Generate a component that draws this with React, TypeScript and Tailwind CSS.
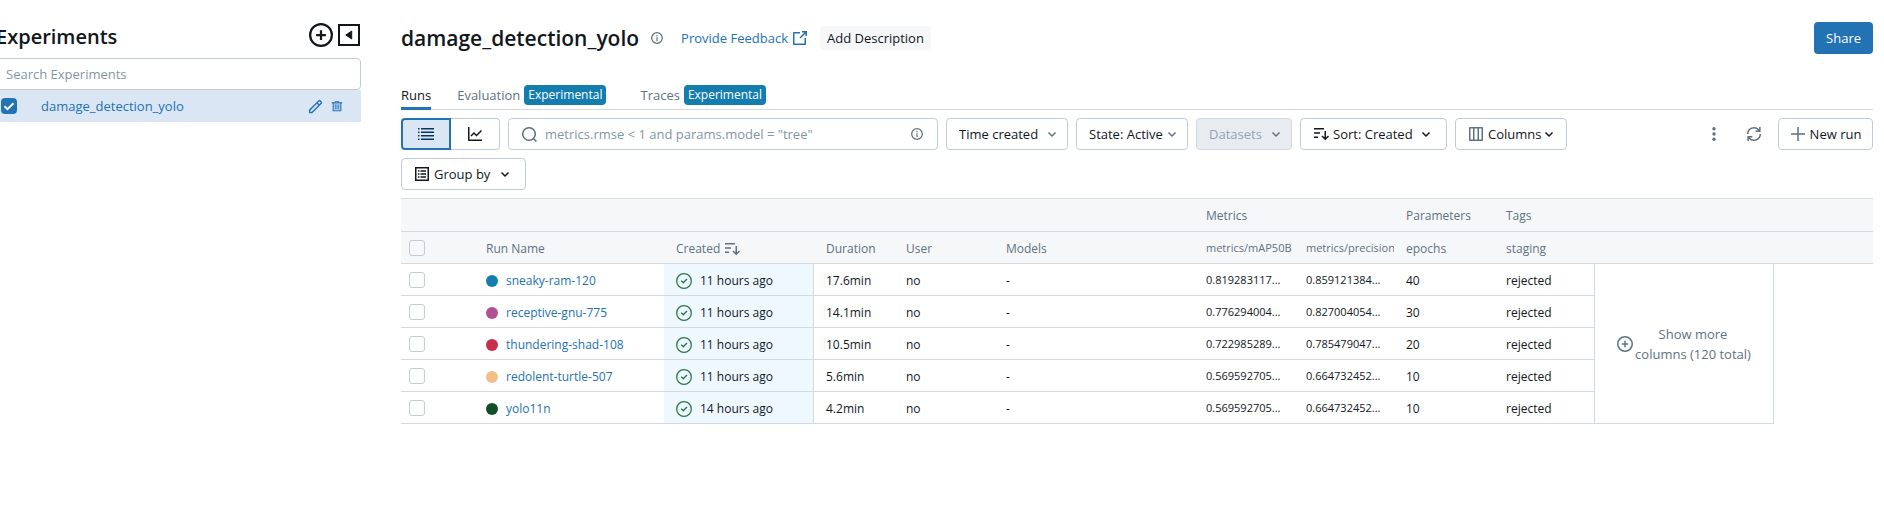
import type { ReactNode } from "react";

type IconProps = { className?: string };

const Svg = ({ className = "", children }: IconProps & { children: ReactNode }) => (
  <svg viewBox="0 0 16 16" fill="currentColor" aria-hidden="true" className={`shrink-0 ${className}`}>
    {children}
  </svg>
);

const InfoIcon = ({ className }: IconProps) => (
  <Svg className={className}>
    <circle cx="8" cy="8" r="7.1" fill="none" stroke="currentColor" strokeWidth="1.7" />
    <path d="M7.2 7h1.6v5H7.2zM8 4a1 1 0 1 1 0 2 1 1 0 0 1 0-2z" />
  </Svg>
);

const ChevronIcon = ({ className }: IconProps) => (
  <Svg className={className}>
    <path d="M8 8.92 10.97 5.97l1.06 1.06L8 11.06 3.97 7.03l1.06-1.06z" />
  </Svg>
);

const PlusCircleIcon = ({ className }: IconProps) => (
  <Svg className={className}>
    <path d="M7.25 7.25V4.75h1.5v2.5h2.5v1.5h-2.5v2.5h-1.5v-2.5h-2.5v-1.5z" />
    <path fillRule="evenodd" d="M8 0a8 8 0 1 0 0 16A8 8 0 0 0 8 0M1.5 8a6.5 6.5 0 1 1 13 0 6.5 6.5 0 0 1-13 0" clipRule="evenodd" />
  </Svg>
);

const CollapseIcon = ({ className }: IconProps) => (
  <svg viewBox="0 0 22 22" fill="currentColor" aria-hidden="true" className={className}>
    <path d="M0 0h22v22H0zM2 2v18h18V2z" fillRule="evenodd" />
    <path d="M13.7 7v8L7.8 11z" stroke="currentColor" strokeLinejoin="round" />
  </svg>
);

const PencilIcon = ({ className }: IconProps) => (
  <Svg className={className}>
    <path
      fillRule="evenodd"
      clipRule="evenodd"
      d="M13.487 1.513a1.75 1.75 0 0 0-2.474 0L1.22 11.306a.75.75 0 0 0-.22.53v2.5c0 .414.336.75.75.75h2.5a.75.75 0 0 0 .53-.22l9.793-9.793a1.75 1.75 0 0 0 0-2.475l-1.086-1.085Zm-1.414 1.06a.25.25 0 0 1 .354 0l1.086 1.086a.25.25 0 0 1 0 .354L12 5.525l-1.44-1.44 1.513-1.512ZM9.5 5.146l-7 7v1.44h1.44l7-7-1.44-1.44Z"
    />
  </Svg>
);

const TrashIcon = ({ className }: IconProps) => (
  <Svg className={className}>
    <path
      fillRule="evenodd"
      d="M5 1.5h6V3h4v1.5h-1.2V15H2.2V4.500H1V3h4zM6.2 2.600V3h3.600v-.4zM3.700 4.500v9h8.600v-9z"
    />
    <path d="M5 5.500h1.300v7H5zM7.350 5.500h1.300v7h-1.300zM9.700 5.500H11v7H9.700z" />
  </Svg>
);

const ExternalIcon = ({ className }: IconProps) => (
  <Svg className={className}>
    <path d="M10 1h5v5h-1.500V3.560L8.530 8.530 7.470 7.470l4.970-4.970H10z" />
    <path d="M1 2.750A.75.75 0 0 1 1.750 2H8v1.500H2.500v10h10V8H14v6.250a.75.75 0 0 1-.75.75H1.750a.75.75 0 0 1-.75-.75z" />
  </Svg>
);

const ListIcon = ({ className }: IconProps) => (
  <Svg className={className}>
    <path d="M0 2h1.500v1.500H0zM3 2h13v1.500H3zM0 5.500h1.500V7H0zM3 5.500h13V7H3zM0 9h1.500v1.500H0zM3 9h13v1.500H3zM0 12.500h1.500V14H0zM3 12.500h13V14H3z" />
  </Svg>
);

const ChartIcon = ({ className }: IconProps) => (
  <Svg className={className}>
    <path d="M1 1v13.250c0 .414.336.75.75.75H15v-1.500H2.500V1z" />
    <path d="m15.030 5.030-1.060-1.060L9.500 8.440 7 5.940 3.470 9.470l1.060 1.060L7 8.060l2.500 2.500z" />
  </Svg>
);

const SearchIcon = ({ className }: IconProps) => (
  <Svg className={className}>
    <path
      fillRule="evenodd"
      clipRule="evenodd"
      d="M8 1a7 7 0 1 0 4.390 12.453l2.550 2.550 1.060-1.060-2.550-2.550A7 7 0 0 0 8 1M2.500 8a5.500 5.500 0 1 1 11 0 5.500 5.500 0 0 1-11 0"
    />
  </Svg>
);

const SortIcon = ({ className }: IconProps) => (
  <Svg className={className}>
    <path d="M1 3.500h10V2H1zM1 7.750h6v-1.500H1zM1 12h4v-1.500H1zM11.500 5v6.440L9.530 9.470l-1.060 1.060 3.780 3.780 3.780-3.780-1.060-1.060L13 11.440V5z" />
  </Svg>
);

const ColumnsIcon = ({ className }: IconProps) => (
  <Svg className={className}>
    <path
      fillRule="evenodd"
      clipRule="evenodd"
      d="M1 1.750A.75.75 0 0 1 1.750 1h12.500a.75.75 0 0 1 .75.75v12.500a.75.75 0 0 1-.75.75H1.750a.75.75 0 0 1-.75-.75zm1.500.75v11H5v-11zm4 0v11h3v-11zm4.500 0v11h2.500v-11z"
    />
  </Svg>
);

const GroupIcon = ({ className }: IconProps) => (
  <Svg className={className}>
    <path fillRule="evenodd" d="M1 1h14v14H1zM2.500 2.500v11h11v-11z" />
    <path d="M4 4.250h1.500v1.500H4zM6.500 4.250H12v1.500H6.500zM4 7.250h1.500v1.500H4zM6.500 7.250H12v1.500H6.500zM4 10.250h1.500v1.500H4zM6.500 10.250H12v1.500H6.500z" />
  </Svg>
);

const RefreshIcon = ({ className }: IconProps) => (
  <Svg className={className}>
    <path d="M1 8a7 7 0 0 1 12.120-4.770V1h1.500v5H9.620V4.500h2.620A5.500 5.500 0 0 0 2.500 8zM15 8a7 7 0 0 1-12.120 4.770V15h-1.500v-5h5v1.500H3.760A5.500 5.500 0 0 0 13.500 8z" />
  </Svg>
);

const KebabIcon = ({ className }: IconProps) => (
  <Svg className={className}>
    <circle cx="8" cy="2.700" r="1.700" />
    <circle cx="8" cy="8" r="1.700" />
    <circle cx="8" cy="13.300" r="1.700" />
  </Svg>
);

const PlusIcon = ({ className }: IconProps) => (
  <Svg className={className}>
    <path d="M7.250 7.250V1h1.500v6.250H15v1.500H8.750V15h-1.500V8.750H1v-1.500z" />
  </Svg>
);

const CheckCircleIcon = ({ className }: IconProps) => (
  <Svg className={className}>
    <path d="M11.530 6.530 7.250 10.810 4.720 8.280l1.060-1.060 1.470 1.470 3.220-3.220z" />
    <path fillRule="evenodd" d="M0 8a8 8 0 1 1 16 0A8 8 0 0 1 0 8m8-6.700a6.700 6.700 0 1 0 0 13.400A6.700 6.700 0 0 0 8 1.300" />
  </Svg>
);

const outlined = "flex h-8 items-center rounded border border-[#c0cdd8] bg-white";

const Dropdown = ({ label, className, disabled }: { label: string; className: string; disabled?: boolean }) => (
  <div className={`grid shrink-0 items-center ${className}`}>
    <select
      aria-label={label}
      disabled={disabled}
      className="col-start-1 row-start-1 h-8 w-full appearance-none rounded border border-[#c0cdd8] bg-white pr-5 pl-3 disabled:border-[#d1d9e1] disabled:bg-[#e8ecf0] disabled:text-[#92a4b3] disabled:opacity-100"
    >
      <option>{label}</option>
    </select>
    <ChevronIcon className="pointer-events-none col-start-1 row-start-1 mr-2 size-4 justify-self-end text-[#5f7281]" />
  </div>
);

const Checkbox = ({ label }: { label: string }) => (
  <input
    type="checkbox"
    aria-label={label}
    className="block size-4 appearance-none rounded-[3px] border border-[#c0cdd8] checked:bg-[#2272b4]"
  />
);

const Badge = () => (
  <span className="rounded bg-[#137dae] px-1 text-xs leading-5 text-white">Experimental</span>
);

const runs = [
  { name: "sneaky-ram-120", dot: "bg-[#137dae]", created: "11 hours ago", duration: "17.6min", map: "0.819283117...", precision: "0.859121384...", epochs: 40 },
  { name: "receptive-gnu-775", dot: "bg-[#b45091]", created: "11 hours ago", duration: "14.1min", map: "0.776294004...", precision: "0.827004054...", epochs: 30 },
  { name: "thundering-shad-108", dot: "bg-[#c82d4c]", created: "11 hours ago", duration: "10.5min", map: "0.722985289...", precision: "0.785479047...", epochs: 20 },
  { name: "redolent-turtle-507", dot: "bg-[#f2be88]", created: "11 hours ago", duration: "5.6min", map: "0.569592705...", precision: "0.664732452...", epochs: 10 },
  { name: "yolo11n", dot: "bg-[#115026]", created: "14 hours ago", duration: "4.2min", map: "0.569592705...", precision: "0.664732452...", epochs: 10 },
];

const Sidebar = () => (
  <aside className="w-[361px] shrink-0 overflow-hidden pt-[23px]">
    <div className="-ml-1">
      <div className="flex h-[35px] items-start">
        <h1 className="flex-1 text-xl leading-7 font-semibold">Experiments</h1>
        <button aria-label="Create experiment" className="mr-[5px]">
          <PlusCircleIcon className="size-6" />
        </button>
        <button aria-label="Hide experiment list" className="mt-px mr-px">
          <CollapseIcon className="size-[22px]" />
        </button>
      </div>
      <input
        aria-label="Search Experiments"
        placeholder="Search Experiments"
        className="block h-8 w-full rounded border border-[#c0cdd8] px-[9px] placeholder:text-[#8396a5]"
      />
      <div className="flex h-8 items-center bg-[#dae6f3] pr-[18px] pl-[5px]">
        <label className="grid size-4 place-items-center">
          <input
            type="checkbox"
            defaultChecked
            aria-label="Select damage_detection_yolo"
            className="col-start-1 row-start-1 size-4 appearance-none rounded bg-[#2272b4]"
          />
          <svg viewBox="0 0 16 16" className="pointer-events-none col-start-1 row-start-1 size-4" aria-hidden="true">
            <path d="m3.500 8.200 3 3 6-6" fill="none" stroke="#fff" strokeWidth="2" />
          </svg>
        </label>
        <a href="#experiment" className="ml-6 flex-1 text-[#2272b4]">
          damage_detection_yolo
        </a>
        <button aria-label="Rename experiment" className="mr-2 text-[#2272b4]">
          <PencilIcon className="size-[15px]" />
        </button>
        <button aria-label="Delete experiment" className="text-[#2272b4]">
          <TrashIcon className="size-3" />
        </button>
      </div>
    </div>
  </aside>
);

const Header = () => (
  <header className="flex h-8 items-center">
    <h2 className="text-[21px] leading-8 font-semibold">damage_detection_yolo</h2>
    <button aria-label="Experiment details" className="ml-3 text-[#5f7281]">
      <InfoIcon className="size-3" />
    </button>
    <a href="#feedback" className="ml-[18px] flex items-center gap-1 text-[#2272b4]">
      Provide Feedback
      <ExternalIcon className="size-4" />
    </a>
    <button className="ml-3 h-6 rounded bg-[#f6f7f9] px-[7px]">Add Description</button>
    <button className="ml-auto h-8 rounded bg-[#2272b4] px-3 text-white">Share</button>
  </header>
);

const Tabs = () => (
  <nav className="mt-[26px] flex h-[30px] items-start border-b border-[#d1d9e1] leading-[30px]">
    <a href="#runs" className="-mb-px h-[30px] border-b-3 border-[#2272b4] leading-[30px]">
      Runs
    </a>
    <a href="#evaluation" className="ml-[26px] flex items-center gap-1 text-[#5f7281]">
      Evaluation <Badge />
    </a>
    <a href="#traces" className="ml-[34px] flex items-center gap-1 text-[#5f7281]">
      Traces <Badge />
    </a>
  </nav>
);

const Toolbar = () => (
  <div className="mt-2 flex items-start">
    <div className="flex flex-1 flex-wrap gap-2">
      <div className="flex h-8">
        <button
          aria-label="List view"
          className="flex w-[50px] items-center justify-center rounded-l border-2 border-[#2272b4] bg-[#dae6f3] text-[#04355d]"
        >
          <ListIcon className="size-4" />
        </button>
        <button
          aria-label="Chart view"
          className="flex w-[49px] items-center justify-center rounded-r border border-l-0 border-[#c0cdd8]"
        >
          <ChartIcon className="size-4" />
        </button>
      </div>
      <div className={`${outlined} w-[430px] px-3 text-[#5f7281]`}>
        <SearchIcon className="size-4" />
        <input
          aria-label="Search runs"
          placeholder={'metrics.rmse < 1 and params.model = "tree"'}
          className="mx-2 min-w-0 flex-1 outline-none placeholder:text-[#8396a5]"
        />
        <InfoIcon className="mr-[2px] size-3" />
      </div>
      <Dropdown label="Time created" className="w-[122px]" />
      <Dropdown label="State: Active" className="w-[112px]" />
      <Dropdown label="Datasets" className="w-24" disabled />
      <button className={`${outlined} w-[147px] px-3`}>
        <SortIcon className="mr-1 size-4" />
        Sort: Created
        <ChevronIcon className="ml-auto size-4" />
      </button>
      <button className={`${outlined} w-[112px] px-3`}>
        <ColumnsIcon className="mr-1 size-4 text-[#5f7281]" />
        Columns
        <ChevronIcon className="ml-auto size-4" />
      </button>
      <button className={`${outlined} w-[125px] px-3`}>
        <GroupIcon className="mr-1 size-4" />
        Group by
        <ChevronIcon className="ml-auto size-4" />
      </button>
    </div>
    <button aria-label="More actions" className="grid size-8 place-items-center text-[#5f7281]">
      <KebabIcon className="size-4" />
    </button>
    <button aria-label="Refresh" className="mx-2 grid size-8 place-items-center text-[#5f7281]">
      <RefreshIcon className="size-4" />
    </button>
    <button className={`${outlined} w-[95px] shrink-0 justify-center gap-1`}>
      <PlusIcon className="size-4 text-[#5f7281]" />
      New run
    </button>
  </div>
);

const RunsTable = () => (
  <table className="mt-2 w-full table-fixed border-separate border-spacing-0 border-t border-[#d1d9e1] text-left text-xs [&_td]:border-[#d1d9e1] [&_td]:px-3 [&_td]:pt-0.5 [&_td]:pb-0 [&_th]:overflow-hidden [&_th]:border-b [&_th]:border-[#d1d9e1] [&_th]:pt-0.5 [&_th]:pb-0 [&_th]:pl-3 [&_th]:font-normal [&_th]:whitespace-nowrap">
    <colgroup>
      <col className="w-[73px]" />
      <col className="w-[190px]" />
      <col className="w-[150px]" />
      <col className="w-20" />
      <col className="w-[100px]" />
      <col className="w-[200px]" />
      <col className="w-[100px]" />
      <col className="w-[100px]" />
      <col className="w-[100px]" />
      <col className="w-[100px]" />
      <col className="w-[180px]" />
      <col />
    </colgroup>
    <thead className="bg-[#f6f7f9] text-[#5f7281]">
      <tr className="h-[33px]">
        <th colSpan={6} />
        <th colSpan={2}>Metrics</th>
        <th>Parameters</th>
        <th>Tags</th>
        <th colSpan={2} />
      </tr>
      <tr className="h-8">
        <th className="!pt-0 !pl-2">
          <Checkbox label="Select all runs" />
        </th>
        <th>Run Name</th>
        <th>
          <span className="flex items-center gap-1">
            Created <SortIcon className="size-4" />
          </span>
        </th>
        <th>Duration</th>
        <th>User</th>
        <th>Models</th>
        <th className="text-[11px]">metrics/mAP50B</th>
        <th className="text-[11px]">metrics/precision</th>
        <th>epochs</th>
        <th>staging</th>
        <th colSpan={2} />
      </tr>
    </thead>
    <tbody>
      {runs.map((run, index) => (
        <tr key={run.name} className="h-8 whitespace-nowrap">
          <td className="border-b !pt-0 !pl-2">
            <Checkbox label={`Select ${run.name}`} />
          </td>
          <td className="border-b">
            <a href="#run" className="flex items-center gap-2 text-[#2272b4]">
              <span className={`size-3 rounded-full ${run.dot}`} />
              {run.name}
            </a>
          </td>
          <td className="border-r border-b bg-[#f0f8ff]">
            <span className="flex items-center gap-2">
              <CheckCircleIcon className="size-4 text-[#277c43]" />
              {run.created}
            </span>
          </td>
          <td className="border-b">{run.duration}</td>
          <td className="border-b">no</td>
          <td className="border-b">-</td>
          <td className="border-b !pr-0 text-[11px]">{run.map}</td>
          <td className="border-b !pr-0 text-[11px]">{run.precision}</td>
          <td className="border-b">{run.epochs}</td>
          <td className="border-b">rejected</td>
          {index === 0 && (
            <td rowSpan={runs.length} className="border-x border-b !pt-0">
              <button className="mx-auto flex items-center gap-[2px] text-[13px] leading-5 whitespace-normal text-[#5f7281]">
                <PlusCircleIcon className="size-4" />
                <span>
                  Show more
                  <br />
                  columns (120 total)
                </span>
              </button>
            </td>
          )}
        </tr>
      ))}
    </tbody>
  </table>
);

export default function App() {
  return (
    <div className="flex min-h-screen bg-white font-['Open_Sans','Noto_Sans',sans-serif] text-[13px] leading-5 text-[#11171c]">
      <Sidebar />
      <main className="min-w-0 flex-1 pt-[22px] pr-[11px] pl-10">
        <Header />
        <Tabs />
        <Toolbar />
        <RunsTable />
      </main>
    </div>
  );
}
